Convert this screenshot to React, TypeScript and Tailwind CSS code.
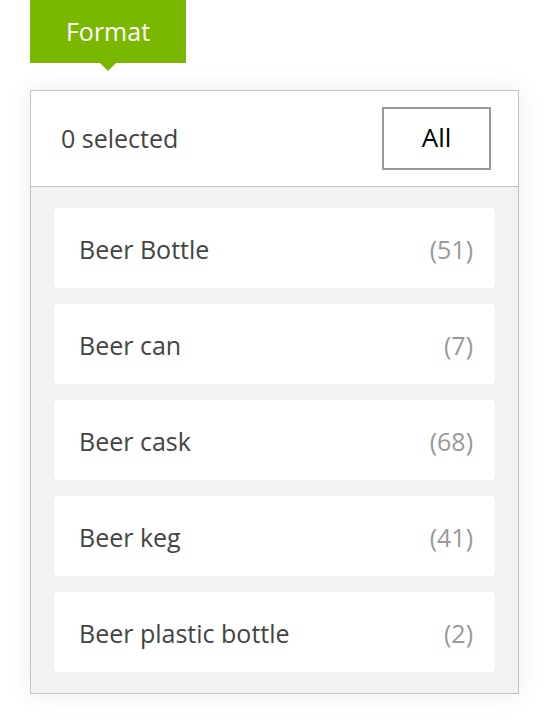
import React from "react";

const items: [string, number][] = [
  ["Beer Bottle", 51],
  ["Beer can", 7],
  ["Beer cask", 68],
  ["Beer keg", 41],
  ["Beer plastic bottle", 2],
];

export default function App() {
  return (
    <div
      className="w-[548px] h-[724px] bg-white relative"
      style={{ fontFamily: '"Open Sans", "Noto Sans", sans-serif' }}
    >
      <div className="pl-[30px]">
        <div className="relative w-[156px] h-[63px] bg-[#7ab800] flex items-center justify-center text-white text-[25px] pt-[1px]">
          Format
          <div className="absolute left-[70px] top-[63px] w-0 h-0 border-l-[8px] border-r-[8px] border-t-[8px] border-l-transparent border-r-transparent border-t-[#7ab800]" />
        </div>
      </div>
      <div className="ml-[30px] mt-[27px] w-[489px] border border-[#c3c3c3] bg-white shadow-[0_0_24px_rgba(0,0,0,0.08)]">
        <div className="h-[96px] flex items-center justify-between pl-[30px] pr-[27px] border-b border-[#c3c3c3]">
          <span className="text-[25px] text-[#444]">0 selected</span>
          <button className="w-[109px] h-[63px] border-2 border-[#999] text-[26px] text-black bg-white pb-[2px]">
            All
          </button>
        </div>
        <div className="bg-[#f2f2f2] px-[23px] pt-[21px] pb-[21px] flex flex-col gap-[16px]">
          {items.map(([name, count]) => (
            <div
              key={name}
              className="h-[80px] bg-white rounded-[4px] flex items-center justify-between pl-[25px] pr-[22px] pt-[3px]"
            >
              <span className="text-[25px] text-[#444]">{name}</span>
              <span className="text-[25px] text-[#999]">({count})</span>
            </div>
          ))}
        </div>
      </div>
    </div>
  );
}
